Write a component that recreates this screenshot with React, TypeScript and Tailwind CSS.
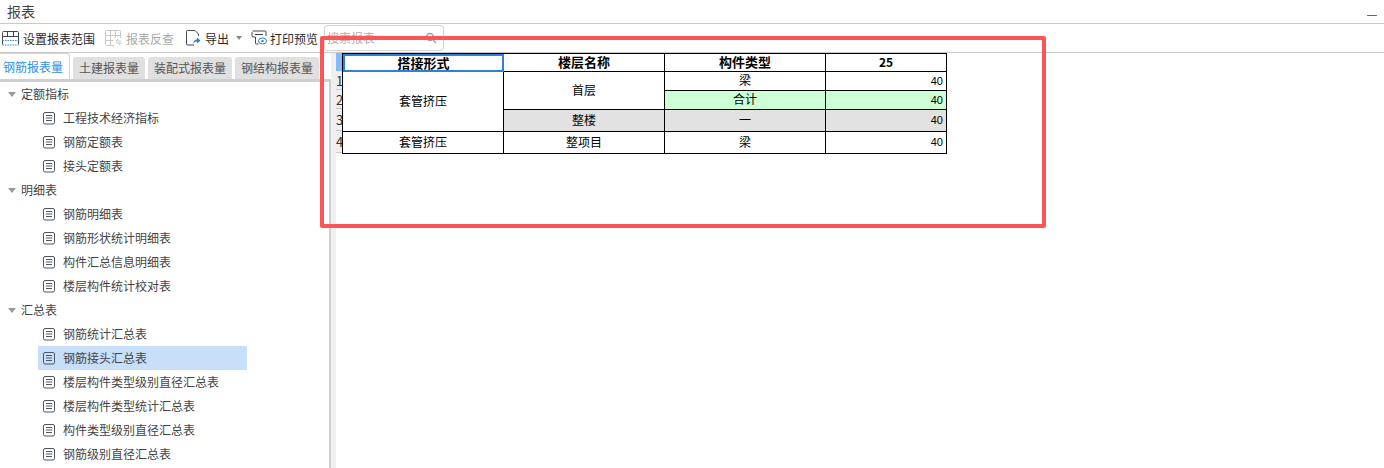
import type { ReactNode } from "react";

const FONT = "font-['Noto_Sans_CJK_SC','Liberation_Sans',sans-serif]";

const tree = [
  { group: "定额指标", items: ["工程技术经济指标", "钢筋定额表", "接头定额表"] },
  { group: "明细表", items: ["钢筋明细表", "钢筋形状统计明细表", "构件汇总信息明细表", "楼层构件统计校对表"] },
  {
    group: "汇总表",
    items: ["钢筋统计汇总表", "钢筋接头汇总表", "楼层构件类型级别直径汇总表", "楼层构件类型统计汇总表", "构件类型级别直径汇总表", "钢筋级别直径汇总表"],
  },
];

function DocIcon() {
  return (
    <svg width="13" height="13" viewBox="0 0 13 13" fill="none" stroke="#4f5563" strokeWidth="1" className="shrink-0">
      <rect x="0.5" y="0.5" width="11" height="11.5" rx="1.5" />
      <path d="M3 3.5h6M3 6h6M3 8.5h6" />
    </svg>
  );
}

function Caret() {
  return (
    <svg width="8" height="5" viewBox="0 0 8 5" className="shrink-0">
      <path d="M0 0h8L4 5z" fill="#9a9a9a" />
    </svg>
  );
}

function RangeIcon() {
  return (
    <svg width="17" height="15" viewBox="0 0 17 15" fill="none" stroke="#3f4654" strokeWidth="1" className="shrink-0">
      <path d="M.5 13.500v-12a1 1 0 0 1 1-1h14a1 1 0 0 1 1 1v12" />
      <path d="M5.500.5v5M11.500.5v5M.5 5.500h16" />
      <path d="M.5 9.500h16M.5 14h16" stroke="#3b8ad9" strokeDasharray="1.500 1" />
    </svg>
  );
}

function LookupIcon() {
  return (
    <svg width="17" height="16" viewBox="0 0 17 16" fill="none" stroke="#c8c8c8" strokeWidth="1" className="shrink-0">
      <path d="M9 15.500H1.500a1 1 0 0 1-1-1v-13a1 1 0 0 1 1-1h13a1 1 0 0 1 1 1V8" />
      <path d="M5.500.5v15M10.500.5V8M.5 5.500h15M.5 10.500h8" />
      <path d="M16 11h-5l2-2M11 13h5l-2 2" />
    </svg>
  );
}

function ExportIcon() {
  return (
    <svg width="16" height="16" viewBox="0 0 16 16" fill="none" className="shrink-0">
      <path d="M9 15H2.500a1 1 0 0 1-1-1V1.500a1 1 0 0 1 1-1H10l3.500 3.500v2" stroke="#3f4654" />
      <path d="M8 14c.4-3 2-4.500 4-4.500V7.500l3.500 3-3.500 3v-2c-1.500 0-3 .8-4 2.500z" fill="#2f80d0" />
    </svg>
  );
}

function PrintIcon() {
  return (
    <svg width="16" height="16" viewBox="0 0 16 16" fill="none" className="shrink-0">
      <path d="M1.500 1h12.500a1 1 0 0 1 1 1v4M1 2v4a1 1 0 0 0 1 1h2.500v6a1 1 0 0 0 1 1h2" stroke="#3f4654" />
      <path d="M4 4.500h8" stroke="#3f4654" />
      <ellipse cx="11.500" cy="11" rx="4" ry="3" stroke="#2f80d0" />
      <circle cx="11.500" cy="11" r="1.200" fill="#2f80d0" />
    </svg>
  );
}

function ToolButton({ icon, label, muted = false, gap = "gap-[4px]" }: { icon: ReactNode; label: string; muted?: boolean; gap?: string }) {
  return (
    <div className={`flex items-center text-[12px] leading-none ${gap} ${muted ? "text-[#a8a8a8]" : "text-[#2b2b2b]"}`}>
      {icon}
      <span className="pt-[2px]">{label}</span>
    </div>
  );
}

function Tab({ label, active = false }: { label: string; active?: boolean }) {
  if (active) {
    return (
      <div className="flex h-[26px] w-[70px] items-center rounded-tr-[3px] border-r border-t border-[#d4d4d4] bg-white pl-[3px] text-[12px] text-[#2e8fe6]">
        {label}
      </div>
    );
  }
  return (
    <div className="mt-[4px] flex h-[22px] items-center justify-center rounded-t-[3px] bg-[#e0e0e0] px-[6px] text-[12px] text-[#555]">
      {label}
    </div>
  );
}

function Sidebar() {
  return (
    <div className="flex h-full w-[331px] shrink-0 flex-col">
      <div className="flex h-[26px] shrink-0 items-start gap-[3px]">
        <Tab label="钢筋报表量" active />
        <Tab label="土建报表量" />
        <Tab label="装配式报表量" />
        <Tab label="钢结构报表量" />
      </div>
      <div className="flex min-h-0 flex-1 overflow-hidden border-r-[2px] border-t-[3px] border-[#cfcfcf] text-[12px] text-[#444]">
        <div className="w-full">
          {tree.map((section) => (
            <div key={section.group}>
              <div className="flex h-[24px] items-center pl-[8px]">
                <Caret />
                <span className="ml-[5px]">{section.group}</span>
              </div>
              {section.items.map((item) => (
                <div key={item} className={`ml-[38px] flex h-[24px] w-[209px] items-center pl-[5px] ${item === "钢筋接头汇总表" ? "bg-[#c7dff8]" : ""}`}>
                  <DocIcon />
                  <span className="ml-[7px] whitespace-nowrap">{item}</span>
                </div>
              ))}
            </div>
          ))}
        </div>
      </div>
    </div>
  );
}

const cell = "flex items-center justify-center border-r border-b border-black pb-[2px]";
const num = "flex items-center justify-end border-r border-b border-black pr-[3px] font-['Liberation_Sans',sans-serif] text-[11px]";

function ReportTable() {
  return (
    <div className="flex items-start">
      <div className="w-[6px] shrink-0 text-[13px] leading-none text-[#333]">
        <div className="h-[18px] bg-[#85bbf8]" />
        {[
          ["1", "h-[19px]"],
          ["2", "h-[19px]"],
          ["3", "h-[22px]"],
          ["4", "h-[22px]"],
        ].map(([n, h]) => (
          <div key={n} className={`flex ${h} items-center overflow-visible border-b border-[#c8c8c8] bg-[#eeeeee]`}>
            {n}
          </div>
        ))}
      </div>
      <div className="grid w-[605px] grid-cols-[161px_161px_161px_121px] grid-rows-[18px_19px_19px_22px_22px] border-l border-t border-black text-[12px] leading-none text-black">
        <div className="flex items-center justify-center border-2 border-[#2f80d8] pb-[2px] text-[13px] font-bold">搭接形式</div>
        <div className={`${cell} text-[13px] font-bold`}>楼层名称</div>
        <div className={`${cell} text-[13px] font-bold`}>构件类型</div>
        <div className={`${cell} font-bold`}>25</div>

        <div className={`${cell} row-span-3`}>套管挤压</div>
        <div className={`${cell} row-span-2`}>首层</div>
        <div className={cell}>梁</div>
        <div className={num}>40</div>

        <div className={`${cell} bg-[#ccffd5]`}>合计</div>
        <div className={`${num} bg-[#ccffd5]`}>40</div>

        <div className={`${cell} bg-[#e2e2e2]`}>整楼</div>
        <div className={`${cell} bg-[#e2e2e2]`}>一</div>
        <div className={`${num} bg-[#e2e2e2]`}>40</div>

        <div className={cell}>套管挤压</div>
        <div className={cell}>整项目</div>
        <div className={cell}>梁</div>
        <div className={num}>40</div>
      </div>
    </div>
  );
}

export default function App() {
  return (
    <div className={`relative flex h-[468px] w-[1384px] flex-col overflow-hidden bg-white ${FONT}`}>
      <div className="flex h-[24px] shrink-0 items-center justify-between border-b border-[#c8c8c8] px-[7px] text-[14px] text-[#444]">
        <span>报表</span>
        <span className="mt-[8px] h-[1px] w-[10px] bg-[#666]" />
      </div>
      <div className="flex h-[29px] shrink-0 items-center border-b border-[#c8c8c8] pl-[2px]">
        <ToolButton icon={<RangeIcon />} label="设置报表范围" />
        <div className="ml-[10px]">
          <ToolButton icon={<LookupIcon />} label="报表反查" muted />
        </div>
        <div className="ml-[11px]">
          <ToolButton icon={<ExportIcon />} label="导出" />
        </div>
        <svg width="6" height="4" viewBox="0 0 6 4" className="ml-[7px] shrink-0">
          <path d="M0 0h6L3 4z" fill="#8a8a8a" />
        </svg>
        <div className="ml-[9px]">
          <ToolButton icon={<PrintIcon />} label="打印预览" gap="gap-[3px]" />
        </div>
        <div className="mb-[1px] ml-[6px] flex h-[26px] w-[120px] items-center justify-between rounded-[3px] border border-[#d4d4d4] bg-white pl-[2px] pr-[6px] text-[12px] text-[#b0b0b0]">
          <span>搜索报表</span>
          <svg width="12" height="12" viewBox="0 0 12 12" fill="none" stroke="#a0a0a0" strokeWidth="1.500">
            <circle cx="5" cy="5" r="3.500" />
            <path d="M8 8l3 3" />
          </svg>
        </div>
      </div>
      <div className="flex min-h-0 flex-1">
        <Sidebar />
        <div className="w-[5px] shrink-0 bg-[#f0f0f0]" />
        <div className="min-w-0 flex-1">
          <ReportTable />
        </div>
      </div>
      <div className="pointer-events-none absolute left-[320px] top-[36px] h-[192px] w-[726px] rounded-[2px] border-[4px] border-[#fb5555]" />
    </div>
  );
}
